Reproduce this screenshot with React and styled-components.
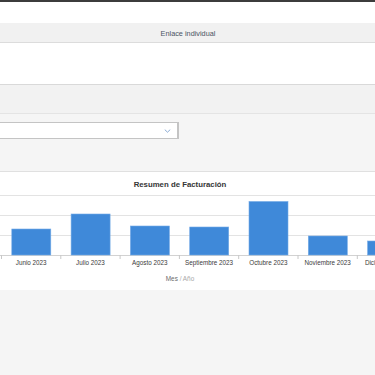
import styled, { createGlobalStyle } from "styled-components";

const GlobalStyle = createGlobalStyle`
  html, body {
    margin: 0;
    padding: 0;
    background: #f5f5f5;
    font-family: "Liberation Sans", Arial, sans-serif;
  }
`;

const months = [
  { label: "Junio 2023", value: 26 },
  { label: "Julio 2023", value: 41 },
  { label: "Agosto 2023", value: 29 },
  { label: "Septiembre 2023", value: 28 },
  { label: "Octubre 2023", value: 53.5 },
  { label: "Noviembre 2023", value: 19 },
  { label: "Diciembre 2023", value: 14 },
];

const STEP = 59.3;
const AXIS_Y = 67;

const App = () => {
  return (
    <>
      <GlobalStyle />
      <Page>
        <TopRule />
        <Gap />
        <HeaderBar>Enlace individual</HeaderBar>
        <Section $height={41} $bg="#ffffff" />
        <Section $height={28} $bg="#f2f2f2" $line="#e4e4e4" />
        <FilterSection>
          <Select>
            <Chevron viewBox="0 0 8 5">
              <path d="M0.6 0.8 L4 4 L7.4 0.8" />
            </Chevron>
          </Select>
        </FilterSection>
        <ChartCard>
          <ChartTitle>Resumen de Facturación</ChartTitle>
          <Plot width="375" height="80" viewBox="0 0 375 80">
            {[7, 27, 47].map((y) => (
              <line key={y} x1="0" x2="375" y1={y + 0.5} y2={y + 0.5} stroke="#e3e3e3" />
            ))}
            <line x1="0" x2="375" y1={AXIS_Y + 0.5} y2={AXIS_Y + 0.5} stroke="#d2d2d2" />
            {months.map((m, i) => {
              const start = 1.5 + STEP * i;
              return (
                <g key={m.label}>
                  <line x1={start} x2={start} y1={AXIS_Y} y2={AXIS_Y + 4} stroke="#c8c8c8" />
                  <rect
                    x={start + 10.3}
                    y={AXIS_Y - m.value}
                    width="39"
                    height={m.value}
                    fill="#3f89d9"
                    stroke="#74aae6"
                    strokeWidth="0.6"
                  />
                  <BarLabel x={start + STEP / 2} y="76.5">
                    {m.label}
                  </BarLabel>
                </g>
              );
            })}
          </Plot>
          <AxisTitle>
            Mes <span>/ Año</span>
          </AxisTitle>
        </ChartCard>
      </Page>
    </>
  );
};

export default App;

const Page = styled.div`
  width: 375px;
  height: 375px;
  overflow: hidden;
  background: #f5f5f5;
  display: flex;
  flex-direction: column;
`;

const TopRule = styled.div`
  height: 2px;
  background: #3c3c3c;
  flex-shrink: 0;
`;

const Gap = styled.div`
  height: 21px;
  background: #ffffff;
  flex-shrink: 0;
`;

const HeaderBar = styled.div`
  height: 20px;
  box-sizing: border-box;
  padding-top: 1px;
  background: #f1f1f1;
  border-bottom: 1px solid #dcdcdc;
  display: flex;
  align-items: center;
  justify-content: center;
  font-size: 7.3px;
  color: #4a5463;
  padding-left: 1px;
  flex-shrink: 0;
`;

const Section = styled.div`
  height: ${(p) => p.$height}px;
  background: ${(p) => p.$bg};
  border-bottom: 1px solid ${(p) => p.$line || "#d9d9d9"};
  flex-shrink: 0;
`;

const FilterSection = styled.div`
  height: 58px;
  box-sizing: border-box;
  padding-top: 8px;
  background: #f5f5f5;
  border-bottom: 1px solid #e0e0e0;
  flex-shrink: 0;
`;

const Select = styled.div`
  width: 180px;
  height: 17px;
  margin-left: -1px;
  box-sizing: border-box;
  background: #ffffff;
  border: 1px solid #c4c4c4;
  border-right-width: 2px;
  display: flex;
  align-items: center;
  justify-content: flex-end;
  padding-right: 6px;
`;

const Chevron = styled.svg`
  width: 7px;
  height: 4px;
  fill: none;
  stroke: #6f97c9;
  stroke-width: 1;
`;

const ChartCard = styled.div`
  height: 118px;
  background: #ffffff;
  display: flex;
  flex-direction: column;
  flex-shrink: 0;
`;

const ChartTitle = styled.div`
  height: 16px;
  box-sizing: border-box;
  padding-top: 8px;
  line-height: 10px;
  text-align: center;
  font-size: 7.8px;
  font-weight: bold;
  color: #353535;
  padding-right: 15px;
`;

const Plot = styled.svg`
  display: block;
`;

const BarLabel = styled.text`
  font-family: "Liberation Sans", Arial, sans-serif;
  font-size: 6.3px;
  fill: #3a3a3a;
  text-anchor: middle;
`;

const AxisTitle = styled.div`
  margin-top: 6px;
  line-height: 10px;
  text-align: center;
  font-size: 6.4px;
  color: #6a6a6a;
  padding-right: 15px;
  span {
    color: #a8a8a8;
  }
`;
